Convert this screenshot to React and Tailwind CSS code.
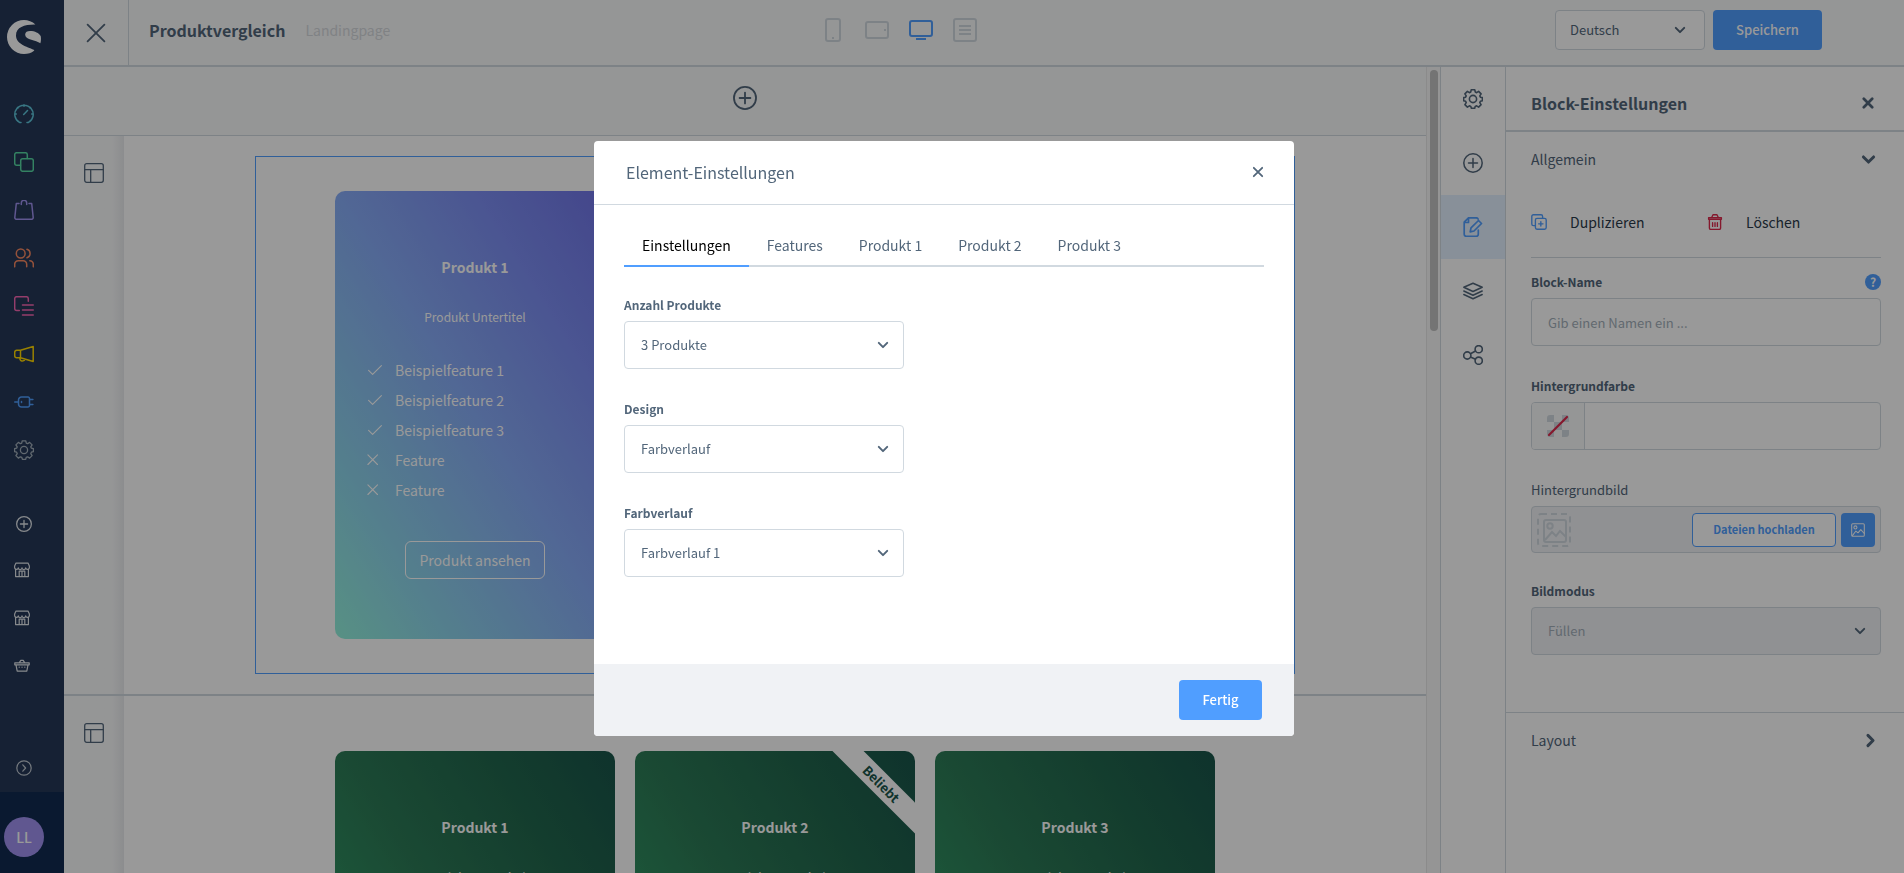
import React, { useState } from 'react';
import clsx from 'clsx';

const Svg = ({ size = 20, stroke = 1.3, className, children }) => (
  <svg
    width={size}
    height={size}
    viewBox="0 0 20 20"
    fill="none"
    stroke="currentColor"
    strokeWidth={stroke}
    strokeLinecap="round"
    strokeLinejoin="round"
    aria-hidden="true"
    className={clsx('shrink-0', className)}
  >
    {children}
  </svg>
);

const GearIcon = (props) => (
  <Svg {...props}>
    <circle cx="10" cy="10" r="3.6" />
    <path d="M8.2.8h3.6l.5 2.3 1.3.6 2-1.3 2.5 2.5-1.3 2 .6 1.3 2 .4v3.1l-2 .5-.6 1.4 1.3 2-2.5 2.5-2-1.3-1.4.6-.5 1.9H8.4l-.6-1.9-1.4-.6-2 1.3-2.5-2.5 1.3-2-.6-1.4-2-.5V8.6l2-.4.6-1.3-1.3-2 2.5-2.5 2 1.3 1.3-.6z" />
  </Svg>
);

const PlusCircleIcon = (props) => (
  <Svg {...props}>
    <circle cx="10" cy="10" r="9.2" />
    <path d="M10 5.5v9M5.5 10h9" />
  </Svg>
);

const ShopIcon = (props) => (
  <Svg {...props}>
    <path d="M2 9v9.2h16V9M2.500 1.300h15L19.200 5v1.800a2.200 2.200 0 0 1-4.600.4 2.200 2.200 0 0 1-4.600 0 2.200 2.200 0 0 1-4.600 0A2.200 2.200 0 0 1 .8 6.800V5zM6.500 18v-6.500h7V18M10 11.500V18" />
  </Svg>
);

const LayoutIcon = (props) => (
  <Svg {...props}>
    <rect x=".7" y=".7" width="18.6" height="18.6" rx="2" />
    <path d="M.7 6.700h18.600M6.700 6.700v12.600" />
  </Svg>
);

const ImageIcon = (props) => (
  <Svg {...props}>
    <rect x="1" y="1" width="18" height="18" rx="1.500" />
    <circle cx="6.300" cy="6.300" r="2.200" />
    <path d="m2 18 5-6.500 3 2.500 4-4.500 5 5.500" />
  </Svg>
);

const ChevronDown = (props) => (
  <Svg {...props}>
    <path d="m4 7 6 6 6-6" />
  </Svg>
);

const CloseIcon = (props) => (
  <Svg {...props}>
    <path d="m3 3 14 14M17 3 3 17" />
  </Svg>
);

const mainNav = [
  {
    label: 'Dashboard',
    color: 'text-[#5fc7dc]',
    icon: (
      <Svg stroke={1.500}>
        <path d="M7 18.400H5.500A9.200 9.200 0 1 1 14.500 18.400H13M10 .8v1.500M.8 10h1.500M17.700 10h1.500M3.500 3.500l.5.5M16.500 3.500l-.5.5M9.700 10.500l3.800-4" />
      </Svg>
    ),
  },
  {
    label: 'Kataloge',
    color: 'text-[#57d9a3]',
    icon: (
      <Svg stroke={1.500}>
        <rect x="6.700" y="6.700" width="12.600" height="12.600" rx="2" />
        <path d="M6.500 13.300H2.700a2 2 0 0 1-2-2V2.700a2 2 0 0 1 2-2h8.600a2 2 0 0 1 2 2v3.800" />
      </Svg>
    ),
  },
  {
    label: 'Bestellungen',
    color: 'text-[#a092f0]',
    icon: (
      <Svg stroke={1.500}>
        <path d="M5 3.500H2.300L.8 17.500a1.700 1.700 0 0 0 1.700 1.800h15a1.700 1.700 0 0 0 1.700-1.800L17.700 3.500H15M7.300 4.500V3a2.700 2.700 0 0 1 5.400 0v1.500" />
      </Svg>
    ),
  },
  {
    label: 'Kunden',
    color: 'text-[#f88962]',
    icon: (
      <Svg stroke={1.500}>
        <circle cx="6.700" cy="5.500" r="4.400" />
        <path d="M.7 18.800v-2.500a3.500 3.500 0 0 1 3.500-3.500h5a3.500 3.500 0 0 1 3.500 3.500v2.500M13 1.300a4.400 4.400 0 0 1 0 8.400M15.800 12.800a3.500 3.500 0 0 1 3.500 3.500v2.500" />
      </Svg>
    ),
  },
  {
    label: 'Inhalte',
    color: 'text-[#f767b2]',
    icon: (
      <Svg stroke={1.500}>
        <path d="M5.300 14.500H2.700a2 2 0 0 1-2-2V2.700a2 2 0 0 1 2-2h9.600a2 2 0 0 1 2 2v2.500M8.500 9h10.800M8.500 14h10.800M8.500 19h10.800" />
      </Svg>
    ),
  },
  {
    label: 'Marketing',
    color: 'text-[#ffd700]',
    icon: (
      <Svg stroke={1.500}>
        <path d="M6.500 6.300 19.200 2.500v15L6.500 13.700M6.500 6.300v7.400H2.700a2 2 0 0 1-2-2V8.300a2 2 0 0 1 2-2zM6 14a2.400 2.400 0 1 0 4.800 1.200" />
      </Svg>
    ),
  },
  {
    label: 'Erweiterungen',
    color: 'text-[#509eff]',
    icon: (
      <Svg stroke={1.500}>
        <path d="M.7 10h3.600M15.500 7.500h3.400M15.500 12.500h3.400M4.500 8a3 3 0 0 1 3-3H14a1.500 1.500 0 0 1 1.500 1.500v7A1.500 1.500 0 0 1 14 15H7.500a3 3 0 0 1-3-3zM7.500 9.500v1" />
      </Svg>
    ),
  },
  { label: 'Einstellungen', color: 'text-[#a3afba]', icon: <GearIcon /> },
];

const SecondaryLink = ({ label, className, children }) => (
  <a href="#channel" aria-label={label} className={clsx('flex w-12 items-center', className)}>
    {children}
  </a>
);

const Sidebar = () => (
  <aside className="flex w-16 shrink-0 flex-col bg-[#253858] text-white">
    <a href="#home" aria-label="Startseite" className="mt-5 ml-[7px]">
      <svg width="34" height="34" viewBox="0 0 34 34" fill="currentColor" aria-hidden="true">
        <path d="M28.400 4.600C25.500 1.600 21 0 17 0a17 17 0 0 0 0 34c4 0 7.500-1.200 10-3.300.5-.5.2-.8-.3-1C20 26.800 9 24 9 15.500 9 7 18 4.400 28.400 4.600z" />
        <path d="M18.200 15c-.3-2.800 2-4 4.800-4 5 0 9 2 10.700 5 .5 2.500.3 5-.3 7.200C29 20 18.700 20 18.200 15z" />
      </svg>
    </a>
    <nav className="mt-9 flex flex-col">
      {mainNav.map((item) => (
        <a
          key={item.label}
          href="#nav"
          aria-label={item.label}
          className={clsx('flex h-12 w-12 items-center justify-center', item.color)}
        >
          {item.icon}
        </a>
      ))}
    </nav>
    <nav className="mt-7 flex flex-col text-[#e2e6ea]">
      <SecondaryLink label="Verkaufskanal hinzufügen" className="h-11 justify-center">
        <PlusCircleIcon size={16} stroke={1.600} />
      </SecondaryLink>
      <SecondaryLink label="Storefront" className="h-12 pl-3.5">
        <ShopIcon size={16} stroke={1.500} />
      </SecondaryLink>
      <SecondaryLink label="Storefront 2" className="h-12 pl-3.5">
        <ShopIcon size={16} stroke={1.500} />
      </SecondaryLink>
      <SecondaryLink label="Warenkorb" className="h-12 pl-3.5">
        <Svg size={16} stroke={1.500}>
          <path d="M1 6h18v2.500H1zM2.500 8.500l1.500 8h12l1.500-8M6.500 6l2-3h3l2 3M6.500 11.500h.1M10 11.500h.1M13.500 11.500h.1" />
        </Svg>
      </SecondaryLink>
    </nav>
    <button type="button" aria-label="Menü ausklappen" className="mt-auto flex h-12 w-12 items-center justify-center text-[#c2cad2]">
      <Svg size={16} stroke={1.500}>
        <circle cx="10" cy="10" r="9" />
        <path d="m8.500 6 3.500 4-3.500 4" />
      </Svg>
    </button>
    <div className="flex h-[81px] flex-col justify-center bg-[#112b50] pt-2">
      <button
        type="button"
        aria-label="Benutzerkonto"
        className="ml-1 flex h-10 w-10 items-center justify-center rounded-full bg-[#a092f0] text-sm font-medium"
      >
        LL
      </button>
    </div>
  </aside>
);

const Select = ({ id, label, value, disabled, className, chevron = 'right-3.5' }) => (
  <div className="relative">
    <select
      id={id}
      aria-label={label}
      disabled={disabled}
      defaultValue={value}
      className={clsx(
        'w-full appearance-none rounded border border-[#d1d9e0] text-[13px] opacity-100',
        disabled ? 'bg-[#f0f2f5] text-[#a3afba]' : 'bg-white text-[#52667a]',
        className
      )}
    >
      <option>{value}</option>
    </select>
    <ChevronDown
      size={14}
      stroke={2.800}
      className={clsx('pointer-events-none absolute top-1/2 -translate-y-1/2 text-[#52667a]', chevron)}
    />
  </div>
);

const Header = () => (
  <header className="flex h-[67px] shrink-0 border-b-2 border-[#d1d9e0] bg-[#f9fafb]">
    <button
      type="button"
      aria-label="Schließen"
      className="flex w-[65px] items-center justify-center border-r border-[#d1d9e0]"
    >
      <CloseIcon size={24} stroke={1.500} />
    </button>
    <div className="grid flex-1 grid-cols-[3fr_auto_4fr] items-center pb-[5px]">
      <div className="flex items-center">
        <h1 className="ml-5 text-base leading-6 font-bold">Produktvergleich</h1>
        <span className="ml-5 text-sm leading-6 text-[#d5d9dd]">Landingpage</span>
      </div>
      <div className="flex items-center text-[#d1d9e0]">
        <button type="button" aria-label="Smartphone" className="w-10">
          <svg width="16" height="24" viewBox="0 0 16 24" fill="none" stroke="currentColor" strokeWidth="2">
            <rect x="1" y="1" width="14" height="22" rx="2" />
            <path d="M7 20h2" />
          </svg>
        </button>
        <button type="button" aria-label="Tablet" className="w-11">
          <svg width="24" height="18" viewBox="0 0 24 18" fill="none" stroke="currentColor" strokeWidth="2">
            <rect x="1" y="1" width="22" height="16" rx="2" />
            <path d="M19 9h2" />
          </svg>
        </button>
        <button type="button" aria-label="Desktop" className="w-11 text-[#509eff]">
          <svg width="24" height="20" viewBox="0 0 24 20" fill="none" stroke="currentColor" strokeWidth="2">
            <rect x="1" y="1" width="22" height="15" rx="2" />
            <path d="M7 19h10" />
          </svg>
        </button>
        <button type="button" aria-label="Formular">
          <svg width="24" height="24" viewBox="0 0 24 24" fill="none" stroke="currentColor" strokeWidth="2">
            <rect x="1" y="1" width="22" height="22" rx="2" />
            <path d="M6 8h12M6 12h12M6 16h12" />
          </svg>
        </button>
      </div>
      <div className="flex items-center justify-end gap-2 pr-[82px]">
        <div className="w-[150px]">
          <Select label="Sprache" value="Deutsch" className="h-10 px-3.5" chevron="right-[18px]" />
        </div>
        <button type="button" className="h-10 w-[109px] rounded bg-[#509eff] text-[13px] font-medium text-white">
          Speichern
        </button>
      </div>
    </div>
  </header>
);

const features = [
  { text: 'Beispielfeature 1', included: true },
  { text: 'Beispielfeature 2', included: true },
  { text: 'Beispielfeature 3', included: true },
  { text: 'Feature', included: false },
  { text: 'Feature', included: false },
];

const ProductCard = ({ title, gradient, badge }) => (
  <article className={clsx('relative flex w-[280px] flex-col items-center overflow-hidden rounded-[10px] px-8 pt-16 pb-15 text-white', gradient)}>
    {badge && (
      <span className="absolute top-[22px] left-[176px] h-[22px] w-[140px] rotate-45 bg-white text-center text-[13px] leading-[22px] font-bold text-[#19554a]">
        {badge}
      </span>
    )}
    <h2 className="text-sm leading-6 font-bold">{title}</h2>
    <p className="mt-7 text-xs leading-5">Produkt Untertitel</p>
    <ul className="mt-7 self-stretch text-sm">
      {features.map((feature, index) => (
        <li key={index} className="flex h-[30px] items-center">
          <span className="w-7">
            {feature.included ? (
              <Svg size={16} stroke={1.400}><path d="m2 10.500 5 5L18 4.500" /></Svg>
            ) : (
              <Svg size={12} stroke={1.800}><path d="m1.500 1.500 16 16M17.500 1.500l-16 16" /></Svg>
            )}
          </span>
          {feature.text}
        </li>
      ))}
    </ul>
    <button type="button" className="mt-9 h-[38px] w-[140px] rounded-md border border-white text-sm">
      Produkt ansehen
    </button>
  </article>
);

const Section = ({ gradient, badge, selected }) => (
  <section className="flex border-b-2 border-[#d1d9e0]">
    <div className="w-[60px] shrink-0 bg-gradient-to-r from-[#f9fafb] from-80% to-[#e9ebed] pt-[27px] pl-5">
      <button type="button" aria-label="Sektion bearbeiten" className="block">
        <LayoutIcon />
      </button>
    </div>
    <div className="flex flex-1 justify-center py-5">
      <div className={clsx('flex gap-5 px-20 py-[35px]', selected && 'outline outline-1 -outline-offset-1 outline-[#509eff]')}>
        <ProductCard title="Produkt 1" gradient={gradient} />
        <ProductCard title="Produkt 2" gradient={gradient} badge={badge} />
        <ProductCard title="Produkt 3" gradient={gradient} />
      </div>
    </div>
  </section>
);

const Stage = () => (
  <main className="flex min-w-0 flex-1 bg-white">
    <div className="flex-1 overflow-hidden">
      <div className="flex h-[69px] items-center justify-center border-b border-[#d1d9e0] bg-[#f9fafb] pb-1.5">
        <button type="button" aria-label="Sektion hinzufügen">
          <PlusCircleIcon size={24} stroke={1.500} />
        </button>
      </div>
      <Section selected gradient="bg-[linear-gradient(to_top_right,#92f2dc_0%,#8dd5eb_20%,#88adf8_50%,#7d8ef3_75%,#7073e7_100%)]" />
      <Section badge="Beliebt" gradient="bg-[linear-gradient(to_top_right,#3bb078_0%,#2f8c5f_36%,#2c7a56_52%,#21664d_78%,#19554a_100%)]" />
    </div>
    <div className="w-3.5 shrink-0 border-l border-[#e8e8e8] bg-[#f8f8f8] pt-[3px] pl-[3px]">
      <div className="h-[261px] w-2 rounded-full bg-[#c1c1c1]" />
    </div>
  </main>
);

const panelTabs = [
  { label: 'Einstellungen', icon: <GearIcon stroke={1.600} /> },
  { label: 'Blöcke', icon: <PlusCircleIcon stroke={1.500} /> },
  {
    label: 'Block-Einstellungen',
    active: true,
    icon: (
      <Svg stroke={1.700}>
        <path d="M15.300 13v4.300a2 2 0 0 1-2 2H3.200a2 2 0 0 1-2-2V5.200L5.500.8h7.800a2 2 0 0 1 1.800 1.200M1.200 5.500h4.300V.8M8 10.800 15.500 3.500l3 3L11 14l-3.800.8z" />
      </Svg>
    ),
  },
  {
    label: 'Navigator',
    icon: (
      <Svg stroke={1.500}>
        <path d="m10 2.200 9.200 4-9.200 4.300L.8 6.200zM.8 10l9.200 4.300 9.200-4.300M.8 13.500 10 17.800l9.200-4.300" />
      </Svg>
    ),
  },
  {
    label: 'Zuordnung',
    icon: (
      <Svg stroke={1.600}>
        <circle cx="4.300" cy="10.500" r="3.600" />
        <circle cx="15.700" cy="4.200" r="3.600" />
        <circle cx="15.700" cy="15.700" r="3.600" />
        <path d="m7.500 8.800 5-2.800M7.500 12l5 2.200" />
      </Svg>
    ),
  },
];

const PanelTabs = () => (
  <nav className="flex w-[66px] shrink-0 flex-col border-x border-[#d1d9e0] bg-white">
    {panelTabs.map((tab) => (
      <button
        key={tab.label}
        type="button"
        aria-label={tab.label}
        className={clsx('flex h-16 items-center justify-center', tab.active && 'bg-[#e3f0ff] text-[#509eff]')}
      >
        {tab.icon}
      </button>
    ))}
  </nav>
);

const SettingsPanel = () => (
  <aside className="w-[398px] shrink-0 bg-white">
    <div className="flex h-[65px] items-center justify-between border-b-2 border-[#d1d9e0] pt-2 pr-[30px] pl-[25px]">
      <h2 className="text-base leading-6 font-bold">Block-Einstellungen</h2>
      <button type="button" aria-label="Panel schließen">
        <CloseIcon size={12} stroke={4.500} />
      </button>
    </div>
    <div className="border-b border-[#d1d9e0] pr-[23px] pb-[57px] pl-[25px]">
      <button type="button" className="flex h-[54px] w-full items-center justify-between pr-1 text-sm">
        Allgemein
        <ChevronDown size={17} stroke={3.500} />
      </button>
      <div className="flex h-[72px] items-center border-b border-[#d1d9e0] text-sm text-[#2b3a4a]">
        <button type="button" className="flex w-44 items-center gap-[23px]">
          <Svg size={16} stroke={1.700} className="text-[#509eff]">
            <rect x="5.500" y="5.500" width="13.500" height="13.500" rx="2" />
            <path d="M5.500 14.500H3a2 2 0 0 1-2-2V3a2 2 0 0 1 2-2h9.500a2 2 0 0 1 2 2v2.500M12.300 9.500v5.500M9.500 12.300H15" />
          </Svg>
          Duplizieren
        </button>
        <button type="button" className="flex items-center gap-[23px]">
          <Svg size={16} stroke={1.700} className="text-[#de294c]">
            <path d="M2 4.500h16v2H2zM3 6.500v11A1.700 1.700 0 0 0 4.700 19.200h10.600a1.700 1.700 0 0 0 1.700-1.700v-11M6 4l1.500-3h5L14 4M7 11v4.500M10 11v4.500M13 11v4.500" />
          </Svg>
          Löschen
        </button>
      </div>
      <div className="mt-3.5">
        <div className="flex h-5 items-center justify-between">
          <label htmlFor="block-name" className="text-xs leading-5 font-bold">Block-Name</label>
          <button
            type="button"
            aria-label="Hilfe"
            className="flex h-4 w-4 items-center justify-center rounded-full bg-[#509eff] text-xs leading-4 font-bold text-white"
          >
            ?
          </button>
        </div>
        <input
          id="block-name"
          type="text"
          placeholder="Gib einen Namen ein ..."
          className="mt-1.5 block h-12 w-full rounded border border-[#d1d9e0] px-4 text-[13px] placeholder:text-[#a3afba]"
        />
      </div>
      <div className="mt-7.5">
        <label htmlFor="background-color" className="block text-xs leading-5 font-bold">Hintergrundfarbe</label>
        <div className="mt-1.5 flex h-12 overflow-hidden rounded border border-[#d1d9e0]">
          <button type="button" aria-label="Farbe wählen" className="flex w-[53px] items-center justify-center border-r border-[#d1d9e0] bg-[#f9fafb]">
            <svg width="22" height="22" viewBox="0 0 22 22" aria-hidden="true">
              <path d="M7 0H3a3 3 0 0 0-3 3v4h7zM15 0h4a3 3 0 0 1 3 3v4h-7zM7 7h8v8H7zM0 15h7v7H3a3 3 0 0 1-3-3zM15 15h7v4a3 3 0 0 1-3 3h-4z" fill="#d1d9e0" />
              <path d="M2 20 20 2" stroke="#de294c" strokeWidth="2.200" strokeLinecap="round" />
            </svg>
          </button>
          <input id="background-color" type="text" className="min-w-0 flex-1 px-4 text-[13px]" />
        </div>
      </div>
      <div className="mt-7.5">
        <span className="block text-[13px] leading-5">Hintergrundbild</span>
        <div className="mt-1.5 flex h-[47px] items-center rounded border border-[#d1d9e0] bg-[#f0f2f5] px-[5px]">
          <svg width="34" height="34" viewBox="0 0 34 34" fill="none" stroke="#d1d9e0" strokeWidth="2" aria-hidden="true">
            <rect x="1" y="1" width="32" height="32" rx="3" strokeDasharray="6 4" />
            <rect x="7" y="7" width="22" height="22" rx="2" />
            <circle cx="13" cy="13" r="2.700" />
            <path d="m8 27 7-8 4 4 4-5 6 6" />
          </svg>
          <button type="button" className="ml-auto h-[34px] w-36 rounded border border-[#509eff] bg-white text-[11px] font-bold text-[#509eff]">
            Dateien hochladen
          </button>
          <button type="button" aria-label="Medien öffnen" className="ml-[5px] flex h-[34px] w-[34px] items-center justify-center rounded bg-[#509eff] text-white">
            <ImageIcon size={14} stroke={1.500} />
          </button>
        </div>
      </div>
      <div className="mt-7">
        <label htmlFor="image-mode" className="block text-xs leading-5 font-bold">Bildmodus</label>
        <div className="mt-1.5">
          <Select id="image-mode" value="Füllen" disabled className="h-12 px-4" />
        </div>
      </div>
    </div>
    <button type="button" className="flex h-[54px] w-full items-center justify-between px-[25px] text-sm">
      Layout
      <ChevronDown size={17} stroke={3.500} className="-rotate-90" />
    </button>
  </aside>
);

const modalTabs = ['Einstellungen', 'Features', 'Produkt 1', 'Produkt 2', 'Produkt 3'];

const modalFields = [
  { id: 'product-count', label: 'Anzahl Produkte', value: '3 Produkte' },
  { id: 'design', label: 'Design', value: 'Farbverlauf' },
  { id: 'gradient', label: 'Farbverlauf', value: 'Farbverlauf 1' },
];

const ElementModal = () => {
  const [activeTab, setActiveTab] = useState('Einstellungen');

  return (
    <div className="fixed inset-0 flex items-center justify-center bg-black/40 pt-1 pr-4">
      <div role="dialog" aria-label="Element-Einstellungen" className="w-[700px] overflow-hidden rounded bg-white">
        <div className="flex h-16 items-center justify-between border-b border-[#d1d9e0] pr-[30px] pb-0.5 pl-8">
          <h2 className="text-base leading-6">Element-Einstellungen</h2>
          <button type="button" aria-label="Dialog schließen">
            <CloseIcon size={12} stroke={3} />
          </button>
        </div>
        <div className="min-h-[459px] px-[30px] pt-6">
          <div role="tablist" className="flex h-[38px] border-b-2 border-[#d1d9e0]">
            {modalTabs.map((tab) => (
              <button
                key={tab}
                type="button"
                role="tab"
                aria-selected={activeTab === tab}
                onClick={() => setActiveTab(tab)}
                className={clsx(
                  '-mb-0.5 border-b-2 px-[18px] pb-1 text-sm',
                  activeTab === tab ? 'border-[#509eff] text-black' : 'border-transparent'
                )}
              >
                {tab}
              </button>
            ))}
          </div>
          <div className="mt-7 flex w-[280px] flex-col gap-[30px]">
            {modalFields.map((field) => (
              <div key={field.id}>
                <label htmlFor={field.id} className="mb-1.5 block text-xs leading-5 font-bold">
                  {field.label}
                </label>
                <Select id={field.id} value={field.value} className="h-12 px-4" />
              </div>
            ))}
          </div>
        </div>
        <div className="flex h-[72px] items-center justify-end bg-[#f0f2f5] px-8">
          <button type="button" className="h-10 w-[83px] rounded bg-[#509eff] text-[13px] font-medium text-white">
            Fertig
          </button>
        </div>
      </div>
    </div>
  );
};

export default function App() {
  return (
    <div className="flex h-screen overflow-hidden bg-white font-['Noto_Sans_CJK_SC',sans-serif] text-[#52667a]">
      <Sidebar />
      <div className="flex min-w-0 flex-1 flex-col">
        <Header />
        <div className="flex min-h-0 flex-1">
          <Stage />
          <PanelTabs />
          <SettingsPanel />
        </div>
      </div>
      <ElementModal />
    </div>
  );
}
